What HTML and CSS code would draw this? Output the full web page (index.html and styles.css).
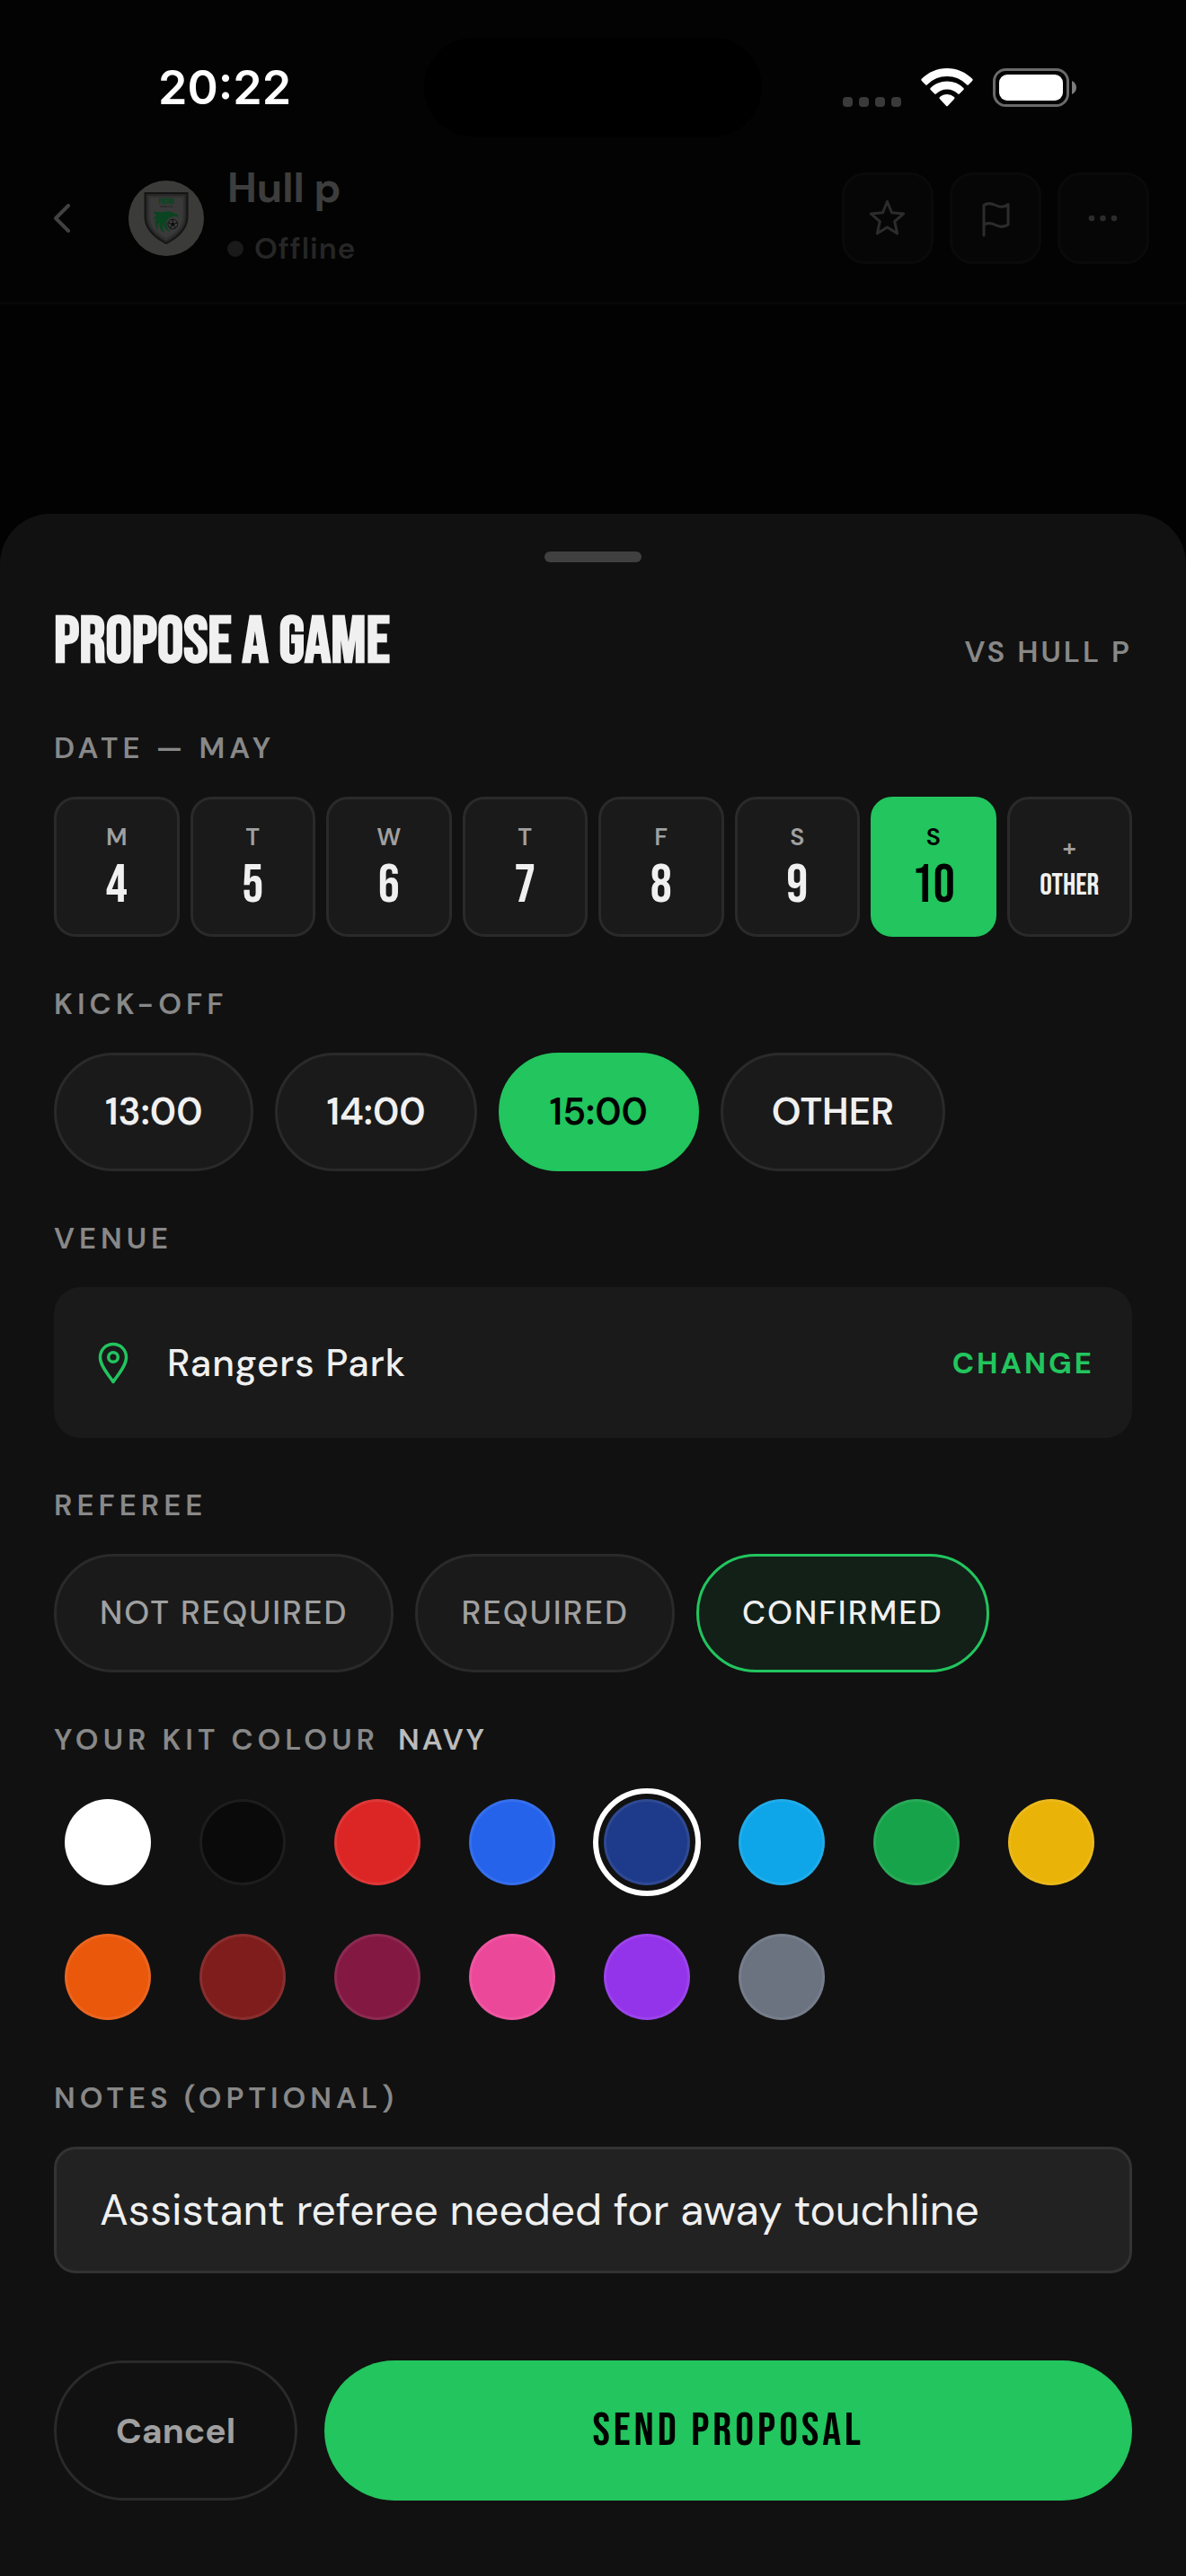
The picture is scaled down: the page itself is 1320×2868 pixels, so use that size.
FILE: index.html
```
<!DOCTYPE html>
<html lang="en">
<head>
    <meta charset="UTF-8">
    <meta name="viewport" content="width=device-width, initial-scale=1.0">
    <title>Propose a Game</title>
    <link rel="stylesheet" href="styles.css">
</head>
<body>
    <div class="status-bar">
        <span class="status-time">20:22</span>
        <span class="island"></span>
        <div class="status-icons">
            <svg width="65" height="11" viewBox="0 0 65 11" fill="#3a3a3a">
                <rect x="0" width="11" height="11" rx="4"/>
                <rect x="18" width="11" height="11" rx="4"/>
                <rect x="36" width="11" height="11" rx="4"/>
                <rect x="54" width="11" height="11" rx="4"/>
            </svg>
            <svg width="58" height="43" viewBox="0 0 58 43" fill="#fff">
                <path d="M29 0C18 0 8 4.500 .8 11.800a1.500 1.500 0 0 0 0 2.100l4.200 4.300a1.400 1.400 0 0 0 2 0A31 31 0 0 1 29 9a31 31 0 0 1 22 9.200 1.400 1.400 0 0 0 2 0l4.200-4.300a1.500 1.500 0 0 0 0-2.100C50 4.500 40 0 29 0z"/>
                <path d="M29 14.500c-7 0-13.500 2.800-18.300 7.400a1.500 1.500 0 0 0 0 2.200l4.300 4.200a1.500 1.500 0 0 0 2.100 0A17.200 17.200 0 0 1 29 23.500c4.600 0 8.800 1.800 11.900 4.800a1.500 1.500 0 0 0 2.100 0l4.300-4.200a1.500 1.500 0 0 0 0-2.200A26.400 26.400 0 0 0 29 14.500z"/>
                <path d="M29 29c-3 0-5.800 1.100-8 3a1.500 1.500 0 0 0 0 2.200l7 7.500a1.400 1.400 0 0 0 2 0l7-7.500a1.500 1.500 0 0 0 0-2.200 12 12 0 0 0-8-3z"/>
            </svg>
            <svg width="94" height="43" viewBox="0 0 94 43">
                <rect x="1.500" y="1.500" width="82" height="40" rx="13" fill="none" stroke="#6a6a6a" stroke-width="3"/>
                <rect x="7" y="7" width="71" height="29" rx="9" fill="#fff"/>
                <path d="M88 14c3 1.200 5 4 5 7.500S91 27.800 88 29z" fill="#7c7c7c"/>
            </svg>
        </div>
    </div>

    <header class="chat-header">
        <button type="button" class="btn-back" aria-label="Back">
            <svg width="18" height="32" viewBox="0 0 18 32" fill="none" stroke="#414141" stroke-width="4" stroke-linecap="round" stroke-linejoin="round">
                <path d="M16 2 2 16l14 14"/>
            </svg>
        </button>
        <svg class="crest" width="84" height="84" viewBox="0 0 84 84">
            <circle cx="42" cy="42" r="42" fill="#3b3b39"/>
            <path d="M17.500 13h49v27c0 13-9 23-24.500 31C26.500 63 17.500 53 17.500 40z" fill="#151515"/>
            <path d="M20.500 16h43v24c0 11.500-8 20.500-21.500 27.800C28.500 60.500 20.500 51.500 20.500 40z" fill="#343434" stroke="#272727" stroke-width="2"/>
            <path d="M23 18.500h38v21c0 10.500-7 18.500-19 25-12-6.500-19-14.500-19-25z" fill="#3a3a3a" stroke="#303030"/>
            <text class="crest-name" x="42" y="26" text-anchor="middle">FIXTRO</text>
            <text class="crest-sub" x="42" y="30" text-anchor="middle">FOOTBALL CLUB</text>
            <path d="M28 34c5 2 9 .8 13 .5 5-.4 8 .3 10 2.200 2.500.3 4.500 1 4.500 4-2-1-4-1-6-.5-4 1-6 2-7 5-1.200 4 .5 8 4 12-5-1.500-7.500-5-7.500-10-1.500 3.500-1 7 1 11-5-2.500-6.500-7.500-5-13-2.500 3-3 6-2 10-4-4-4-9-1.500-13-2 .2-2.500.8-3.500 2 0-2.500 1-4 3-5.500-1.500-.8-2.500-2.500-3-4.700z" fill="#0a4420"/>
            <circle cx="49.300" cy="48.600" r="5.400" fill="#3d3d3d" stroke="#111" stroke-width="1"/>
            <path d="m49.300 46.200 2.300 1.700-.9 2.700h-2.800l-.9-2.700z" fill="#0c0c0c"/>
            <path d="M49.300 46v-2.600M51.600 48l2.500-1M50.700 50.500l1.600 2.300M47.900 50.500l-1.600 2.300M47 48l-2.500-1" stroke="#111" stroke-width="1.200"/>
        </svg>
        <div class="chat-team">
            <h1>Hull p</h1>
            <p class="presence"><span class="presence-dot"></span>Offline</p>
        </div>
        <div class="chat-actions">
            <button type="button" class="btn-icon" aria-label="Favourite">
                <svg width="48" height="48" viewBox="0 0 48 48" fill="none" stroke="#2c2c2c" stroke-width="3" stroke-linejoin="round">
                    <path d="m23.500 5.500 5 12.200 13.200 1.200-10 8.800 3 13.300-11.200-7-11.200 7 3-13.300-10-8.800 13.200-1.200z"/>
                </svg>
            </button>
            <button type="button" class="btn-icon" aria-label="Report">
                <svg width="48" height="48" viewBox="0 0 48 48" fill="none" stroke="#2c2c2c" stroke-width="3" stroke-linecap="round" stroke-linejoin="round">
                    <path d="M11 43V9.500c3-2.300 8-2.300 13 0s10 2.500 14-1V31c-4 3-9 3-14 .5s-10-2.500-13 0"/>
                </svg>
            </button>
            <button type="button" class="btn-icon" aria-label="More">
                <svg width="48" height="48" viewBox="0 0 48 48" fill="#2c2c2c">
                    <circle cx="11" cy="24" r="3.300"/>
                    <circle cx="23.500" cy="24" r="3.300"/>
                    <circle cx="36" cy="24" r="3.300"/>
                </svg>
            </button>
        </div>
    </header>

    <form class="sheet" id="proposalForm">
        <span class="handle"></span>

        <div class="sheet-head">
            <h2>PROPOSE A GAME</h2>
            <span class="opponent">VS HULL P</span>
        </div>

        <fieldset>
            <legend>DATE — MAY</legend>
            <div class="dates">
                <label class="date"><input type="radio" name="date" value="4"><span class="dow">M</span><span class="num">4</span></label>
                <label class="date"><input type="radio" name="date" value="5"><span class="dow">T</span><span class="num">5</span></label>
                <label class="date"><input type="radio" name="date" value="6"><span class="dow">W</span><span class="num">6</span></label>
                <label class="date"><input type="radio" name="date" value="7"><span class="dow">T</span><span class="num">7</span></label>
                <label class="date"><input type="radio" name="date" value="8"><span class="dow">F</span><span class="num">8</span></label>
                <label class="date"><input type="radio" name="date" value="9"><span class="dow">S</span><span class="num">9</span></label>
                <label class="date"><input type="radio" name="date" value="10" checked><span class="dow">S</span><span class="num">10</span></label>
                <label class="date date-other"><input type="radio" name="date" value="other"><span class="dow">+</span><span class="num">OTHER</span></label>
            </div>
        </fieldset>

        <fieldset>
            <legend>KICK-OFF</legend>
            <div class="pills">
                <label class="pill"><input type="radio" name="kickoff" value="13:00">13:00</label>
                <label class="pill"><input type="radio" name="kickoff" value="14:00">14:00</label>
                <label class="pill"><input type="radio" name="kickoff" value="15:00" checked>15:00</label>
                <label class="pill"><input type="radio" name="kickoff" value="other">OTHER</label>
            </div>
        </fieldset>

        <section class="field">
            <h3 class="field-label">VENUE</h3>
            <div class="venue">
                <svg width="36" height="48" viewBox="0 0 36 48" fill="none" stroke="#22c55e" stroke-width="3.500" stroke-linejoin="round">
                    <path d="M18 45.500C13 38 3.500 27.500 3.500 18.500 3.500 9.500 10 3.500 18 3.500s14.500 6 14.500 15c0 9-9.500 19.500-14.500 27z"/>
                    <circle cx="18" cy="18" r="5.300"/>
                </svg>
                <span class="venue-name">Rangers Park</span>
                <button type="button" class="btn-change">CHANGE</button>
            </div>
        </section>

        <fieldset>
            <legend>REFEREE</legend>
            <div class="pills referee">
                <label class="pill"><input type="radio" name="referee" value="none">NOT REQUIRED</label>
                <label class="pill"><input type="radio" name="referee" value="required">REQUIRED</label>
                <label class="pill"><input type="radio" name="referee" value="confirmed" checked>CONFIRMED</label>
            </div>
        </fieldset>

        <fieldset>
            <legend>YOUR KIT COLOUR <span class="kit-name" id="kitName">NAVY</span></legend>
            <div class="swatches">
                <input type="radio" name="kit" class="swatch white" value="White" aria-label="White">
                <input type="radio" name="kit" class="swatch black" value="Black" aria-label="Black">
                <input type="radio" name="kit" class="swatch red" value="Red" aria-label="Red">
                <input type="radio" name="kit" class="swatch blue" value="Blue" aria-label="Blue">
                <input type="radio" name="kit" class="swatch navy" value="Navy" aria-label="Navy" checked>
                <input type="radio" name="kit" class="swatch sky" value="Sky" aria-label="Sky">
                <input type="radio" name="kit" class="swatch green" value="Green" aria-label="Green">
                <input type="radio" name="kit" class="swatch yellow" value="Yellow" aria-label="Yellow">
                <input type="radio" name="kit" class="swatch orange" value="Orange" aria-label="Orange">
                <input type="radio" name="kit" class="swatch maroon" value="Maroon" aria-label="Maroon">
                <input type="radio" name="kit" class="swatch claret" value="Claret" aria-label="Claret">
                <input type="radio" name="kit" class="swatch pink" value="Pink" aria-label="Pink">
                <input type="radio" name="kit" class="swatch purple" value="Purple" aria-label="Purple">
                <input type="radio" name="kit" class="swatch grey" value="Grey" aria-label="Grey">
            </div>
        </fieldset>

        <div class="field">
            <label class="field-label" for="notes">NOTES (OPTIONAL)</label>
            <input type="text" id="notes" class="notes" value="Assistant referee needed for away touchline">
        </div>

        <div class="actions">
            <button type="button" class="btn-cancel">Cancel</button>
            <button type="submit" class="btn-send">SEND PROPOSAL</button>
        </div>
    </form>

    <script>
        const form = document.getElementById('proposalForm');

        form.addEventListener('submit', e => e.preventDefault());

        form.querySelectorAll('.swatch').forEach(swatch => {
            swatch.addEventListener('change', () => {
                document.getElementById('kitName').textContent = swatch.value.toUpperCase();
            });
        });
    </script>
</body>
</html>
```
FILE: styles.css
```
* {
    margin: 0;
    padding: 0;
    box-sizing: border-box;
}

body {
    min-height: 100vh;
    display: flex;
    flex-direction: column;
    background: #020202;
    color: #f0f0f0;
    font-family: 'DM Sans', Inter, 'Liberation Sans', sans-serif;
}

button,
input {
    font-family: inherit;
}

button {
    border: none;
    background: none;
    cursor: pointer;
}

svg {
    display: block;
    flex-shrink: 0;
}

/* Status bar */
.status-bar {
    display: grid;
    grid-template-columns: 1fr 376px 1fr;
    align-items: center;
    padding-top: 42px;
    background: #030303;
}

.status-time {
    padding-left: 176px;
    font-family: Inter, 'Liberation Sans', sans-serif;
    font-size: 52px;
    font-weight: 600;
    color: #fff;
}

.island {
    height: 110px;
    border-radius: 55px;
    background: #000;
}

.status-icons {
    display: flex;
    justify-content: flex-end;
    align-items: flex-end;
    gap: 22px;
    padding-right: 121px;
}

/* Chat header behind the sheet */
.chat-header {
    display: flex;
    align-items: center;
    padding: 27px 41px 29px 60px;
    background: #030303;
    border-bottom: 3px solid #070707;
}

.btn-back {
    margin-right: 65px;
}

.crest-name {
    font: bold 8px 'Bebas Neue', Roboto, sans-serif;
    fill: #0a4420;
}

.crest-sub {
    font: 3px 'Bebas Neue', Roboto, sans-serif;
    fill: #222;
}

.chat-team {
    margin-left: 26px;
    line-height: 60px;
}

.chat-team h1 {
    font-size: 46px;
    font-weight: 700;
    color: #3d3d3d;
    margin-bottom: 8px;
}

.presence {
    display: flex;
    align-items: center;
    gap: 12px;
    font-size: 33px;
    font-weight: 600;
    letter-spacing: 1px;
    color: #262626;
}

.presence-dot {
    width: 18px;
    height: 18px;
    border-radius: 50%;
    background: #1a1a1a;
}

.chat-actions {
    display: flex;
    gap: 18px;
    margin-left: auto;
}

.btn-icon {
    display: flex;
    align-items: center;
    justify-content: center;
    width: 102px;
    height: 102px;
    background: #060606;
    border: 3px solid #0a0a0a;
    border-radius: 26px;
}

/* Bottom sheet */
.sheet {
    display: flex;
    flex-direction: column;
    margin-top: auto;
    padding: 42px 60px 84px;
    background: #111;
    border-radius: 56px 56px 0 0;
}

.handle {
    align-self: center;
    width: 108px;
    height: 12px;
    border-radius: 6px;
    background: #404040;
}

.sheet-head {
    display: flex;
    justify-content: space-between;
    align-items: baseline;
    padding-top: 43px;
    margin-bottom: 41px;
    line-height: 92px;
}

.sheet-head h2,
.num,
.btn-send {
    font-family: 'Bebas Neue', Roboto, sans-serif;
}

.sheet-head h2 {
    font-size: 73px;
    font-weight: 700;
}

.opponent,
legend,
.field-label {
    font-size: 33px;
    font-weight: 600;
    color: #888;
}

.opponent {
    letter-spacing: 3px;
}

fieldset,
.field {
    border: none;
    min-width: 0;
    margin-bottom: 55px;
}

legend,
.field-label {
    display: block;
    margin-bottom: 34px;
    line-height: 40px;
    letter-spacing: 5px;
}

.date input,
.pill input {
    position: absolute;
    opacity: 0;
}

.dates {
    display: grid;
    grid-template-columns: repeat(8, 1fr);
    gap: 12px;
}

.date {
    display: flex;
    flex-direction: column;
    align-items: center;
    justify-content: center;
    gap: 3px;
    height: 156px;
    padding-top: 3px;
    background: #1a1a1a;
    border: 3px solid #2a2a2a;
    border-radius: 24px;
    cursor: pointer;
}

.dow {
    font-size: 27px;
    font-weight: 600;
    line-height: 36px;
    color: #a0a0a0;
}

.num {
    font-size: 60px;
    line-height: 66px;
}

.date-other .num {
    font-size: 34px;
    line-height: 42px;
}

.date:has(:checked),
.pill:has(:checked) {
    background: #22c55e;
    border-color: #22c55e;
    color: #000;
}

.date:has(:checked) .dow {
    color: #000;
}

.pills {
    display: flex;
    flex-wrap: wrap;
    gap: 24px;
}

.pill {
    padding: 0 54px;
    background: #1a1a1a;
    border: 3px solid #2a2a2a;
    border-radius: 66px;
    font-size: 42px;
    font-weight: 600;
    line-height: 126px;
    cursor: pointer;
}

.referee .pill {
    padding: 0 48px;
    font-size: 36px;
    font-weight: 500;
    letter-spacing: 2px;
    color: #a0a0a0;
}

.referee .pill:has(:checked) {
    background: #122018;
    color: #f0f0f0;
}

.venue {
    display: flex;
    align-items: center;
    height: 168px;
    padding: 0 42px 0 48px;
    background: #1a1a1a;
    border-radius: 30px;
}

.venue-name {
    flex: 1;
    margin-left: 42px;
    font-size: 42px;
    font-weight: 500;
    letter-spacing: 1px;
}

.btn-change {
    font-size: 33px;
    font-weight: 700;
    letter-spacing: 3px;
    color: #22c55e;
}

.kit-name {
    margin-left: 8px;
    letter-spacing: 3px;
    color: #bbb;
}

.swatches {
    display: flex;
    flex-wrap: wrap;
    gap: 54px;
    padding: 12px;
}

.swatch {
    appearance: none;
    width: 96px;
    height: 96px;
    border: 3px solid rgba(255, 255, 255, 0.08);
    border-radius: 50%;
    cursor: pointer;
}

.swatch:checked {
    outline: 6px solid #fff;
    outline-offset: 6px;
}

.white { background-color: #fff; }
.black { background-color: #0a0a0a; }
.red { background-color: #dc2626; }
.blue { background-color: #2563eb; }
.navy { background-color: #1e3a8a; }
.sky { background-color: #0ea5e9; }
.green { background-color: #16a34a; }
.yellow { background-color: #eab308; }
.orange { background-color: #ea580c; }
.maroon { background-color: #7f1d1d; }
.claret { background-color: #831843; }
.pink { background-color: #ec4899; }
.purple { background-color: #9333ea; }
.grey { background-color: #6b7280; }

.notes {
    display: block;
    width: 100%;
    height: 141px;
    padding: 0 48px;
    background: #222;
    border: 3px solid #333;
    border-radius: 24px;
    color: #f0f0f0;
    font-size: 48px;
}

.actions {
    display: flex;
    gap: 30px;
    margin-top: 42px;
}

.actions button {
    height: 156px;
    border-radius: 78px;
}

.btn-cancel {
    padding: 0 66px;
    border: 3px solid #2a2a2a;
    font-size: 39px;
    font-weight: 700;
    color: #a0a0a0;
}

.btn-send {
    flex: 1;
    background: #22c55e;
    color: #000;
    font-size: 52px;
    letter-spacing: 4px;
}
```
